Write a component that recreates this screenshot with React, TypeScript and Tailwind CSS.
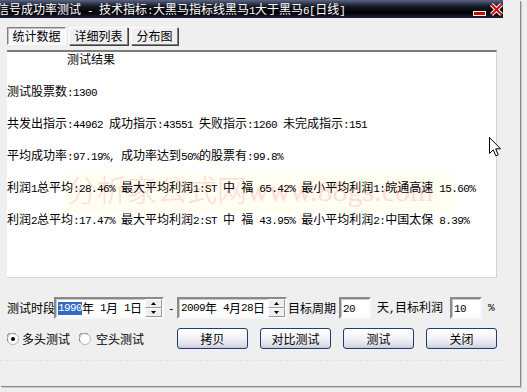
import React from "react";

const ASC = "font-['Liberation_Mono',monospace] text-[11px] tracking-[-0.6px]";
const CJK = "font-['Noto_Sans_CJK_SC',sans-serif] text-[12px]";

function T({ s }: { s: string }) {
  const parts = s.split(/([\x20-\x7e]+)/).filter((p) => p.length > 0);
  return (
    <>
      {parts.map((p, i) =>
        /^[\x20-\x7e]+$/.test(p) ? (
          <span key={i} className={ASC}>
            {p}
          </span>
        ) : (
          <span key={i} className={CJK}>
            {p}
          </span>
        )
      )}
    </>
  );
}

function Tri({ up }: { up: boolean }) {
  return (
    <svg width="5" height="3" viewBox="0 0 5 3">
      {up ? <path d="M2.5 0 L5 3 L0 3 Z" fill="#000" /> : <path d="M0 0 L5 0 L2.5 3 Z" fill="#000" />}
    </svg>
  );
}

function Spin() {
  return (
    <div className="ml-auto w-[17px] h-[18px] flex flex-col">
      <div className="h-[9px] flex items-center justify-center bg-[#efefef] border-t border-l border-t-white border-l-white border-b border-r border-b-[#9a9a9a] border-r-[#9a9a9a]">
        <Tri up={true} />
      </div>
      <div className="h-[9px] flex items-center justify-center bg-[#efefef] border-t border-l border-t-white border-l-white border-b border-r border-b-[#9a9a9a] border-r-[#9a9a9a]">
        <Tri up={false} />
      </div>
    </div>
  );
}

const BOX =
  "h-[22px] bg-white border-2 border-t-[#8a8a8a] border-l-[#8a8a8a] border-b-[#f8f8f8] border-r-[#f8f8f8] shadow-[inset_1px_1px_0_#c8c8c8]";

function Radio({ checked }: { checked: boolean }) {
  return (
    <svg width="12" height="12" viewBox="0 0 12 12">
      <circle cx="6" cy="6" r="5.5" fill="#fff" stroke="#b4b4b4" />
      <path d="M1.2 8.5 A5 5 0 0 1 8.5 1.2" fill="none" stroke="#707070" strokeWidth="1" />
      {checked && <circle cx="6" cy="6" r="2" fill="#000" />}
    </svg>
  );
}

function Btn({ label }: { label: string }) {
  return (
    <div className="w-[71px] h-[21px] rounded-[3px] border border-[#1c3f73] bg-[linear-gradient(to_bottom,#ffffff_0%,#f6f6f9_40%,#dedeea_85%,#c9c9d9_100%)] flex items-center justify-center whitespace-pre">
      <T s={label} />
    </div>
  );
}

export default function App() {
  return (
    <div className="relative w-[527px] h-[392px] overflow-hidden bg-[#efefef] text-black text-[12px] leading-[12px] font-['Noto_Sans_CJK_SC',sans-serif]">
      <div className="w-[520px] h-[386px] flex flex-col bg-[#efefef] shadow-[1px_1px_0_#8c8c8c,2px_2px_0_#c8c8c8]">
        {/* title bar */}
        <div className="w-[503px] h-[18px] shrink-0 flex items-center overflow-hidden text-white bg-[linear-gradient(to_bottom,#5a6482_0%,#161a26_35%,#000_70%,#1a2240_100%)]">
          <div className="ml-[-3px] pt-[1px] whitespace-pre">
            <T s="信号成功率测试 - 技术指标:大黑马指标线黑马1大于黑马6[日线]" />
          </div>
          <div className="ml-auto flex items-center gap-[4px]">
            <svg width="13" height="13" viewBox="0 0 13 13">
              <rect x="0.5" y="8.5" width="12" height="4" fill="#d40000" stroke="#fff" strokeWidth="1" />
            </svg>
            <svg width="13" height="13" viewBox="0 0 13 13">
              <path d="M1.5 1.5 L11.5 11.5 M11.5 1.5 L1.5 11.5" stroke="#fff" strokeWidth="4" />
              <path d="M1.5 1.5 L11.5 11.5 M11.5 1.5 L1.5 11.5" stroke="#e00000" strokeWidth="2" />
            </svg>
          </div>
        </div>

        {/* tabs */}
        <div className="mt-[9px] ml-[7px] flex gap-[3px] h-[18px] shrink-0">
          <div className="w-[59px] h-[18px] flex items-center justify-center bg-[#f8f8f8] border border-t-[#808080] border-l-[#808080] border-b-white border-r-white shadow-[inset_1px_1px_0_#c0c0c0]">
            <T s="统计数据" />
          </div>
          <div className="w-[59px] h-[18px] flex items-center justify-center bg-[#efefef] border border-t-white border-l-white border-b-[#808080] border-r-[#808080] shadow-[1px_1px_0_#404040]">
            <T s="详细列表" />
          </div>
          <div className="w-[47px] h-[18px] flex items-center justify-center bg-[#efefef] border border-t-white border-l-white border-b-[#808080] border-r-[#808080] shadow-[1px_1px_0_#404040]">
            <T s="分布图" />
          </div>
        </div>

        {/* result panel */}
        <div className="mt-[5px] ml-[7px] w-[490px] h-[228px] shrink-0 relative bg-white border-t-2 border-t-[#7c7c7c] border-r border-b border-r-[#d4d4d4] border-b-[#d4d4d4]">
          <div className="absolute left-[58px] top-[122px] w-[390px] h-[39px] bg-[#fffef0] overflow-hidden">
            <div className="mt-[-4px] pl-[2px] whitespace-nowrap text-[#ffdcdc] leading-[36px]">
              <span className="font-['Noto_Sans_CJK_SC',serif] font-light text-[30px]">分析家公式网</span>
              <span className="font-['Liberation_Serif',serif] text-[30px]">www.88gs.com</span>
            </div>
          </div>
          <div className="relative flex flex-col gap-[20px] pt-[1px]">
            <div className="h-[12px] whitespace-pre ml-[60px]">
              <T s="测试结果" />
            </div>
            <div className="h-[12px] whitespace-pre">
              <T s="测试股票数:1300" />
            </div>
            <div className="h-[12px] whitespace-pre">
              <T s="共发出指示:44962 成功指示:43551 失败指示:1260 未完成指示:151" />
            </div>
            <div className="h-[12px] whitespace-pre">
              <T s="平均成功率:97.19%, 成功率达到50%的股票有:99.8%" />
            </div>
            <div className="h-[12px] whitespace-pre">
              <T s="利润1总平均:28.46% 最大平均利润1:ST 中 福 65.42% 最小平均利润1:皖通高速 15.60%" />
            </div>
            <div className="h-[12px] whitespace-pre">
              <T s="利润2总平均:17.47% 最大平均利润2:ST 中 福 43.95% 最小平均利润2:中国太保 8.39%" />
            </div>
          </div>
        </div>

        {/* date row */}
        <div className="mt-[19px] ml-[7px] h-[22px] flex items-center shrink-0 whitespace-pre">
          <div className="w-[47px]">
            <T s="测试时段" />
          </div>
          <div className={`${BOX} w-[110px] flex items-center pl-[2px]`}>
            <span className={`${ASC} inline-block h-[13px] leading-[13px] bg-[#316ac5] text-white`}>1990</span>
            <T s="年 1月 1日" />
            <Spin />
          </div>
          <div className="w-[13px] pl-[4px]">
            <T s="-" />
          </div>
          <div className={`${BOX} w-[110px] flex items-center pl-[2px]`}>
            <T s="2009年 4月28日" />
            <Spin />
          </div>
          <div className="ml-[1px]">
            <T s="目标周期" />
          </div>
          <div className={`${BOX} ml-[3px] w-[32px] pl-[2px] pt-[2px]`}>
            <span className={`${ASC} leading-[9px]`}>20</span>
          </div>
          <div className="ml-[6px]">
            <T s="天,目标利润" />
          </div>
          <div className={`${BOX} ml-[7px] w-[32px] pl-[2px] pt-[2px]`}>
            <span className={`${ASC} leading-[9px]`}>10</span>
          </div>
          <div className="ml-[6px] mt-[-3px]">
            <span className={ASC}>%</span>
          </div>
        </div>

        {/* radio + buttons row */}
        <div className="mt-[9px] ml-[7px] h-[21px] flex items-center shrink-0">
          <Radio checked={true} />
          <div className="ml-[3px]">
            <T s="多头测试" />
          </div>
          <div className="ml-[9px] flex items-center">
            <Radio checked={false} />
          </div>
          <div className="ml-[5px]">
            <T s="空头测试" />
          </div>
          <div className="ml-[33px] flex gap-[12px]">
            <Btn label="拷贝" />
            <Btn label="对比测试" />
            <Btn label="测试" />
            <Btn label="关闭" />
          </div>
        </div>

        <div className="mt-[11px] w-[503px] border-t border-dashed border-[#e0e0e0]" />
      </div>

      {/* mouse cursor */}
      <svg className="absolute left-[489px] top-[137px]" width="12" height="20" viewBox="0 0 12 20">
        <path d="M0.5 0.5 L0.5 16.5 L4.3 12.8 L6.8 18.8 L9.2 17.8 L6.7 11.8 L11.5 11.8 Z" fill="#fff" stroke="#000" strokeWidth="1" strokeLinejoin="miter" />
      </svg>
    </div>
  );
}
